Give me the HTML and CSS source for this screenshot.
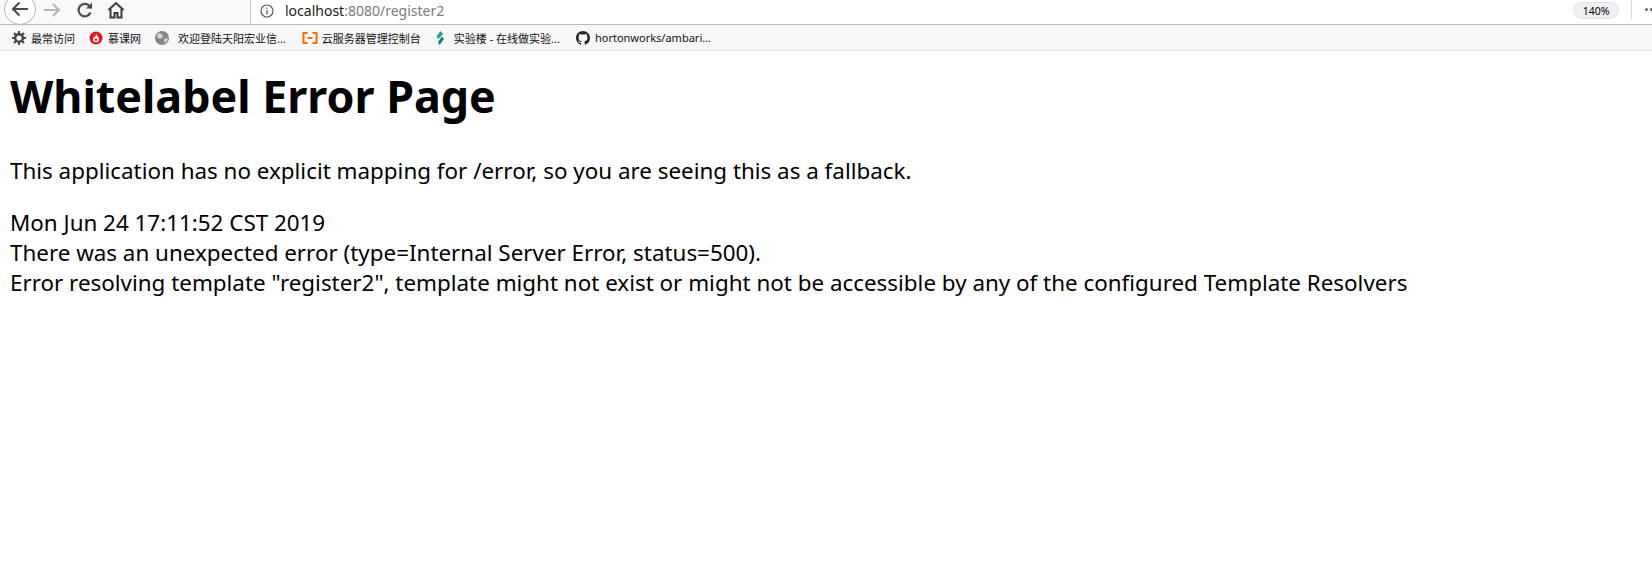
FILE: index.html
```html
<!DOCTYPE html>
<html lang="en">
<head>
    <meta charset="UTF-8">
    <meta name="viewport" content="width=device-width, initial-scale=1.0">
    <title>Whitelabel Error Page</title>
    <link rel="stylesheet" href="styles.css">
</head>
<body>

    <div class="toolbar">
        <div class="nav-buttons">
            <div class="back-button">
                <svg width="20" height="20" viewBox="0 0 20 20" fill="none" stroke="#4a4a4f" stroke-width="2"><path d="M18 10H3M9.500 3.500L3 10l6.500 6.500"/></svg>
            </div>
            <svg class="forward" width="18" height="18" viewBox="0 0 18 18" fill="none" stroke="#b5b5b7" stroke-width="2"><path d="M1 9h15M10 3l6 6-6 6"/></svg>
            <svg class="reload" width="18" height="18" viewBox="0 0 18 18" fill="none" stroke="#4a4a4f" stroke-width="2.200"><path d="M14.500 11.500A6.200 6.200 0 1 1 13 4.500L15.500 7"/><path d="M16 1.500V7.500H10" fill="#4a4a4f" stroke="none"/></svg>
            <svg class="home" width="18" height="18" viewBox="0 0 18 18" fill="none" stroke="#3a3a3f" stroke-width="2"><path d="M1.500 9L9 2l7.500 7"/><path d="M3.500 8v8.500h4v-4.500h3v4.500h4V8"/></svg>
        </div>
        <div class="url-bar">
            <svg class="info-icon" width="16" height="16" viewBox="0 0 16 16" fill="none" stroke="#5a5a5f" stroke-width="1.200"><circle cx="8" cy="8" r="6"/><path d="M8 7v4.500M8 4.500v1.300"/></svg>
            <span class="host">localhost</span><span class="path">:8080/register2</span>
            <span class="zoom-pill">140%</span>
            <div class="url-end"><span class="dots"></span></div>
        </div>
    </div>

    <div class="bookmarks">
        <div class="bookmark first">
            <svg width="14" height="14" viewBox="0 0 14 14"><circle cx="7" cy="7" r="3.800" fill="none" stroke="#444" stroke-width="2.400"/><path d="M7 0v3M7 11v3M0 7h3M11 7h3M2 2l2 2M10 10l2 2M12 2l-2 2M4 10l-2 2" stroke="#444" stroke-width="2"/></svg>
            <span>最常访问</span>
        </div>
        <div class="bookmark second">
            <svg width="14" height="14" viewBox="0 0 14 14"><circle cx="7" cy="7" r="6.500" fill="#e8141c"/><path d="M7 2.500C8 5 10 6 10 8.200A3 3 0 0 1 4 8.200C4 7 5 6 5.500 5.500 6 6.500 6.500 6.500 7 2.500Z" fill="#fff"/><circle cx="7" cy="8.800" r="1.200" fill="#e8141c"/></svg>
            <span>慕课网</span>
        </div>
        <div class="bookmark third">
            <svg width="16" height="16" viewBox="0 0 16 16"><circle cx="8" cy="8" r="7" fill="#85858a"/><path d="M4 3l4 1 1 3-3 2-3-2zM10 9l3-1 1 2-3 3-1-2z" fill="#d5d5d8"/></svg>
            <span>欢迎登陆天阳宏业信...</span>
        </div>
        <div class="bookmark fourth">
            <svg width="16" height="12" viewBox="0 0 16 12" fill="none" stroke="#ff6a00" stroke-width="2"><path d="M5.500 1H1.500V11H5.500M10.500 1H14.500V11H10.500M5.500 6H10.500"/></svg>
            <span>云服务器管理控制台</span>
        </div>
        <div class="bookmark fifth">
            <svg width="10" height="14" viewBox="0 0 10 14"><path d="M5.500 0L8 3 3.500 8 1.500 5.500Z" fill="#21a08c"/><path d="M7 5.500L9 8 4.500 14 3 11Z" fill="#0f7f74"/></svg>
            <span>实验楼 - 在线做实验...</span>
        </div>
        <div class="bookmark sixth">
            <svg width="14" height="14" viewBox="0 0 16 16" fill="#24292e"><path d="M8 0C3.580 0 0 3.580 0 8c0 3.540 2.290 6.530 5.470 7.590.4.070.55-.170.55-.380 0-.190-.010-.820-.010-1.490-2.010.370-2.530-.490-2.690-.940-.090-.230-.480-.940-.820-1.130-.280-.150-.680-.520-.010-.530.630-.010 1.080.580 1.230.820.720 1.210 1.870.870 2.330.660.070-.520.280-.870.510-1.070-1.780-.200-3.640-.890-3.640-3.950 0-.870.310-1.590.820-2.150-.080-.200-.360-1.020.080-2.120 0 0 .670-.210 2.200.820.640-.180 1.320-.270 2-.270s1.360.090 2 .270c1.530-1.040 2.200-.820 2.200-.820.440 1.100.160 1.920.080 2.120.510.560.820 1.270.820 2.150 0 3.070-1.870 3.750-3.650 3.950.290.250.540.730.540 1.480 0 1.070-.010 1.930-.010 2.200 0 .210.150.460.550.380A8.010 8.010 0 0 0 16 8c0-4.420-3.580-8-8-8z"/></svg>
            <span>hortonworks/ambari...</span>
        </div>
    </div>

    <div class="content">
        <h1>Whitelabel Error Page</h1>
        <p>This application has no explicit mapping for /error, so you are seeing this as a fallback.</p>
        <div>Mon Jun 24 17:11:52 CST 2019</div>
        <div>There was an unexpected error (type=Internal Server Error, status=500).</div>
        <div>Error resolving template "register2", template might not exist or might not be accessible by any of the configured Template Resolvers</div>
    </div>

</body>
</html>
```

FILE: styles.css
```css
body {
    font-family: "Noto Sans", "Noto Sans CJK SC", sans-serif;
    background: white;
    color: black;
    margin: 0;
    height: 588px;
    overflow: hidden;
}

.toolbar {
    display: flex;
    height: 24px;
    background: #f9f9fa;
    border-bottom: 1px solid #b8b8ba;
}

.nav-buttons {
    display: flex;
    align-items: center;
    width: 250px;
    height: 24px;
    flex-shrink: 0;
}

.back-button {
    display: flex;
    align-items: center;
    justify-content: center;
    width: 30px;
    height: 30px;
    margin: -6px 0 0 4px;
    background: white;
    border: 1px solid #b5b5b7;
    border-radius: 50%;
    flex-shrink: 0;
}

.forward { margin: -4px 0 0 7px; }
.reload { margin: -4px 0 0 15px; }
.home { margin: -4px 0 0 13px; }

.url-bar {
    display: flex;
    align-items: flex-start;
    flex: 1;
    height: 24px;
    padding-left: 8px;
    background: white;
    border-left: 1px solid #c4c4c6;
    font-size: 14px;
    line-height: 21px;
}

.info-icon { margin: 3px 10px 0 0; }
.host { color: #1e1e20; }
.path { color: #7c7c80; }

.zoom-pill {
    width: 46px;
    height: 17px;
    margin: 2px 0 0 auto;
    background: #f0f0f2;
    border: 1px solid #e2e2e4;
    border-radius: 9px;
    font-size: 10.500px;
    line-height: 17px;
    text-align: center;
    box-sizing: border-box;
}

.url-end {
    width: 20px;
    height: 20px;
    margin-left: 12px;
    border-left: 1px solid #dcdcde;
    position: relative;
}

.dots {
    position: absolute;
    left: 13px;
    top: 8px;
    width: 3px;
    height: 3px;
    background: #66666a;
    border-radius: 50%;
    box-shadow: 5px 0 0 #66666a;
}

.bookmarks {
    display: flex;
    align-items: center;
    height: 25px;
    padding-left: 12px;
    background: #f7f7f8;
    border-bottom: 1px solid #e2e2e4;
    font-size: 11px;
    color: #111;
}

.bookmark {
    display: flex;
    align-items: center;
    gap: 5px;
}

.second { margin-left: 14px; }
.third { margin-left: 13px; gap: 8px; }
.fourth { margin-left: 16px; gap: 4px; }
.fifth { margin-left: 14px; gap: 9px; }
.sixth { margin-left: 16px; }

.content {
    padding: 0 10px;
    font-size: 22.400px;
    line-height: 30px;
}

h1 {
    font-size: 44.800px;
    line-height: 60px;
    margin: 15px 0 30px;
}

p {
    margin: 0 0 22px;
}
```
